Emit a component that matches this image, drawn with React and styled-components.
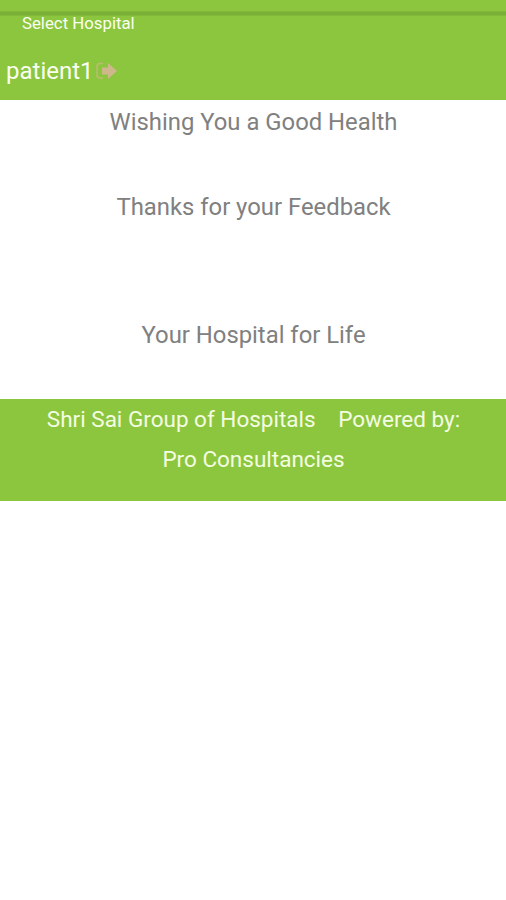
import React from 'react';
import styled, { createGlobalStyle } from 'styled-components';

const green = '#8cc63f';

const GlobalStyle = createGlobalStyle`
  body {
    margin: 0;
    background: #fff;
    font-family: Roboto, "Liberation Sans", sans-serif;
  }
`;

const Header = styled.header`
  display: flex;
  flex-direction: column;
  height: 100px;
  background: ${green};
  color: #fafff0;
`;

const Divider = styled.div`
  height: 5px;
  margin-top: 11px;
  background: linear-gradient(#82ba3a, #78ae36 40%, #7bb137 70%, #83bc3a);
`;

const Title = styled.div`
  padding-left: 22px;
  font-size: 16.8px;
  line-height: 15px;
`;

const UserRow = styled.div`
  display: flex;
  align-items: center;
  height: 30px;
  margin-top: 25px;
  padding-left: 6px;
  font-size: 24px;
`;

const LogoutIcon = styled.svg`
  width: 22px;
  height: 18px;
  margin-left: 2px;
`;

const Messages = styled.main`
  display: flex;
  flex-direction: column;
  height: 298px;
  padding: 1px 0 0 1px;
`;

const Message = styled.p`
  margin: 0 0 ${props => props.$gap || 0}px;
  color: #808080;
  font-size: 23.85px;
  line-height: 43px;
  text-align: center;
`;

const Footer = styled.footer`
  height: 102px;
  padding-left: 1px;
  background: ${green};
  color: #f4fde2;
  font-size: 22.5px;
  line-height: 40px;
  text-align: center;
`;

const Company = styled.span`
  margin-right: 17px;
`;

const App = () => {
  return (
    <div>
      <GlobalStyle />
      <Header>
        <Divider />
        <Title>Select Hospital</Title>
        <UserRow>
          <span>patient1</span>
          <LogoutIcon viewBox="0 0 22 18">
            <path d="M7 1.5H4Q1 1.5 1 4.5V13Q1 16 4 16H7" fill="none" stroke="#bdba72" strokeWidth="1.5" />
            <path d="M6 5.5H12V1L21 9L12 17V12.5H6Z" fill="#cdb78b" />
          </LogoutIcon>
        </UserRow>
      </Header>
      <Messages>
        <Message $gap={42}>Wishing You a Good Health</Message>
        <Message $gap={85}>Thanks for your Feedback</Message>
        <Message>Your Hospital for Life</Message>
      </Messages>
      <Footer>
        <Company>Shri Sai Group of Hospitals</Company> Powered by:
        <br />
        Pro Consultancies
      </Footer>
    </div>
  );
}

export default App
